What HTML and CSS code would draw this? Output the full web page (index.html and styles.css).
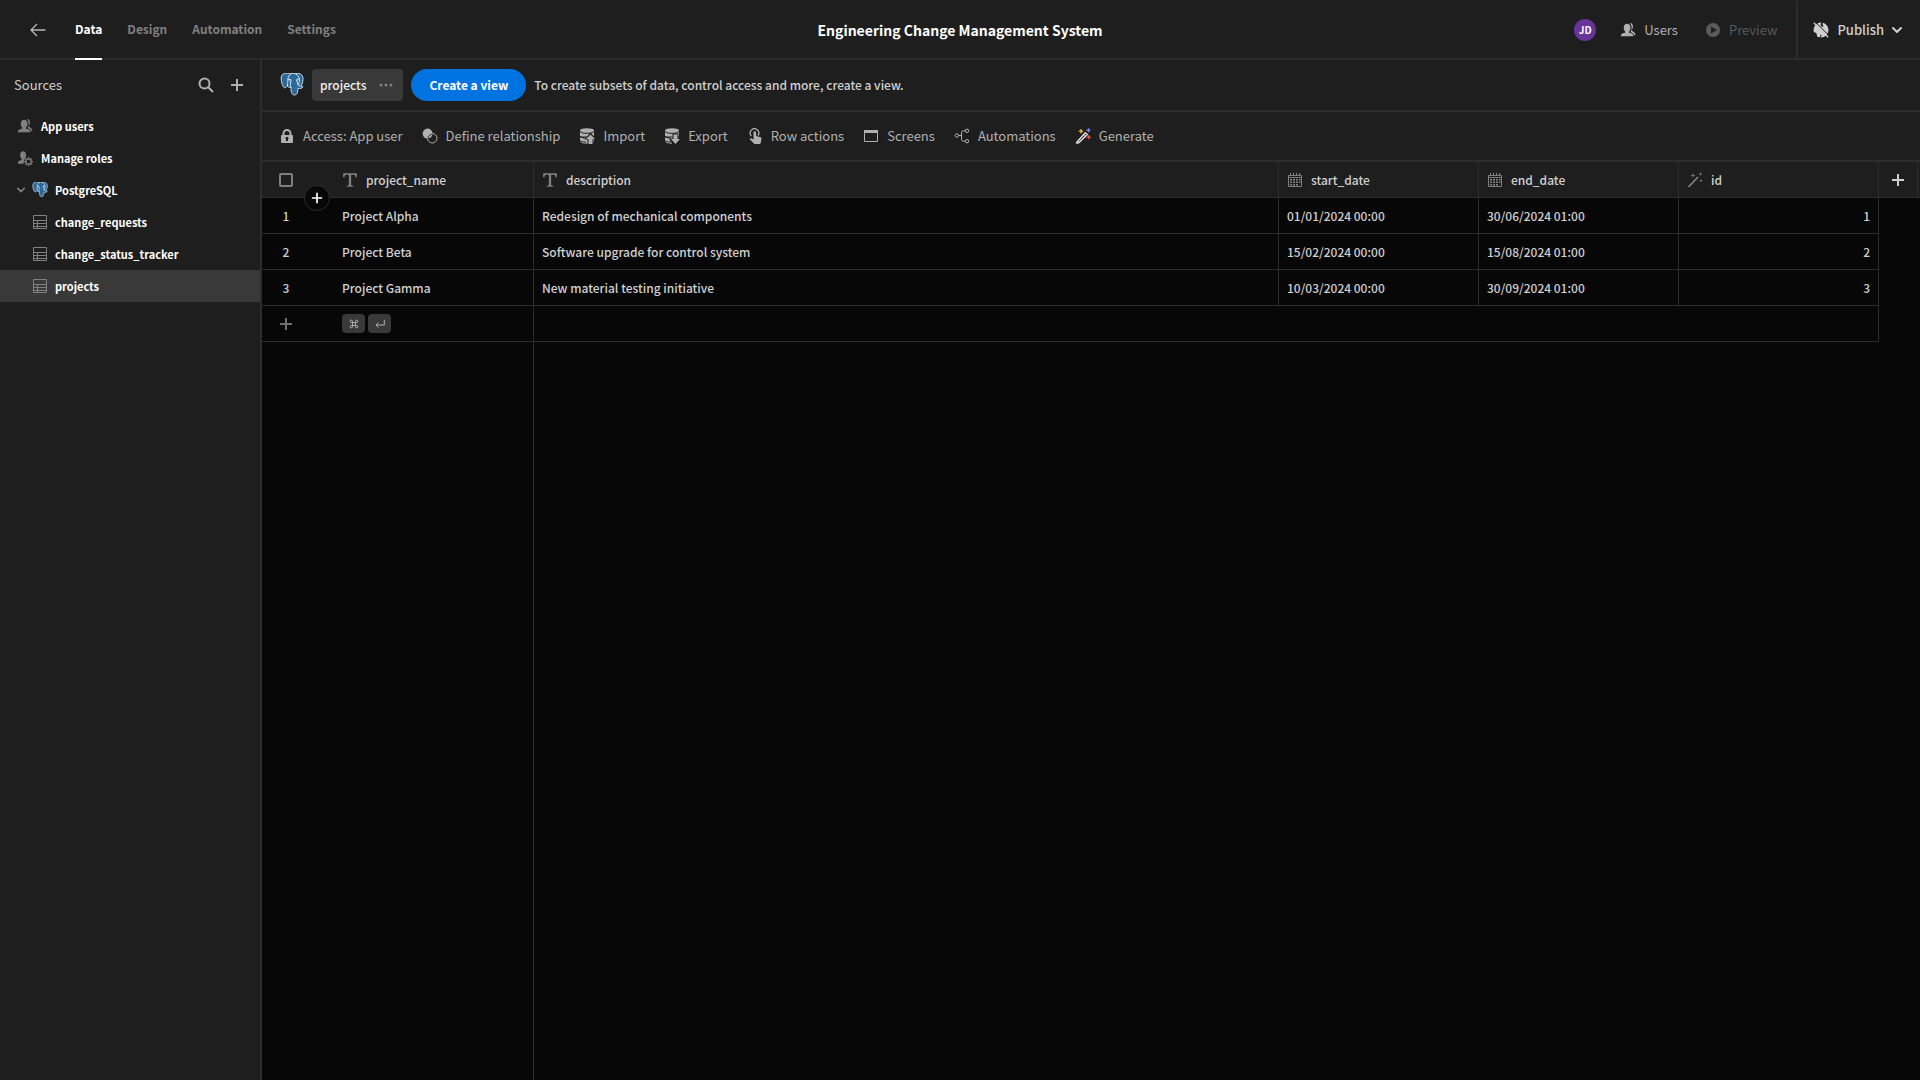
FILE: index.html
```html
<!DOCTYPE html>
<html lang="en">
<head>
    <meta charset="UTF-8">
    <meta name="viewport" content="width=device-width, initial-scale=1.0">
    <title>Engineering Change Management System</title>
    <link rel="stylesheet" href="styles.css">
</head>
<body>
    <!-- shared icons -->
    <svg class="sprite" aria-hidden="true">
        <symbol id="icon-plus" viewBox="0 0 14 14">
            <path d="M7 1v12M1 7h12" fill="none" stroke="currentColor" stroke-width="2"/>
        </symbol>
        <symbol id="icon-chevron" viewBox="0 0 10 10">
            <path d="M1 3l4 4 4-4" fill="none" stroke="currentColor" stroke-width="2" stroke-linecap="round" stroke-linejoin="round"/>
        </symbol>
        <symbol id="icon-users" viewBox="0 0 18 18">
            <path d="M10 11.500c0-.4.2-.7.400-1 .9-1 1.400-2.400 1.400-4C11.800 3.600 10.300 2 8 2S4.200 3.600 4.200 6.500c0 1.600.6 3 1.400 4 .3.300.4.600.4 1 0 .3-.2.600-.6.700C2.500 12.700 1 14 1 15.400V16h14v-.6c0-1.400-1.500-2.700-4.400-3.200-.4-.1-.6-.4-.6-.7z"/>
            <path d="M10.800 1.200c2.300-.2 3.800 1.400 3.800 4 0 1.700-.7 3-1.400 3.900-.3.400-.1.900.3 1.100 2.100.8 3.800 2 3.800 4.600h-1.500c-.5-1.800-2.200-2.900-4.200-3.500 1-1.200 1.500-2.900 1.500-4.800 0-2.300-.9-4.200-2.300-5.300z"/>
        </symbol>
        <symbol id="icon-postgres" viewBox="0 1 24 24">
            <path d="M4.500 1.500C1.500 2 .8 5 1.300 8.500c.5 3.500 1.800 7.300 3.500 7.300 1 0 1.700-1 2.500-1.800l1 .9c.8.500 2 .7 2.700.5 0 3 .2 7.600 3.400 7.600 3 0 3.300-3 3.500-6.500 1.800.2 4.300-.2 5-1.500.3-.8-1-.7-2-.6 1.600-2.800 3-7.600 1.600-10.200C21 1.200 17.400 1 15.200 1.700c-1.300-.4-3-.4-4.300.2C9 1.200 6.500 1 4.500 1.500z" fill="#2b6a98" stroke="#c8d6e0" stroke-width="1" stroke-linejoin="round"/>
            <path d="M10.900 2C8.200 3.400 7.700 6 7.900 9c.1 2-.9 3.600-.5 5M8 7.600c1.400-.8 3-.5 3 .8 0 2-.8 3.500-.8 5 0 1 .4 1.600 1.200 2M15.500 1.800c2.500 1.300 4 3.600 4 5.700 0 2.700-.9 4-.9 5.400 0 1 .8 1.300 1.300 1.300M19.300 7.200c-1.600-.7-2.900-.2-2.700 1.200.1 1.900 1.500 3 1.500 4.600" fill="none" stroke="#d8e3ec" stroke-width="1" stroke-linecap="round"/>
            <circle cx="10" cy="8" r=".6" fill="#fff"/>
            <circle cx="17.500" cy="8" r=".6" fill="#fff"/>
        </symbol>
        <symbol id="icon-table" viewBox="0 0 14 14">
            <path d="M.5.5h13v13H.5zM.5 5.500h13M.5 8.500h13M.5 11.500h13M4.500 5.500v8" fill="none" stroke="currentColor"/>
        </symbol>
        <symbol id="icon-text" viewBox="0 0 14 14">
            <path d="M1 1h12v3.500h-1.200c-.1-1.400-.5-2-1.900-2H8v8.600c0 .7.500.9 1.800.9v1H4.200v-1c1.300 0 1.800-.2 1.800-.9V2.500H4.100c-1.400 0-1.800.6-1.900 2H1z"/>
        </symbol>
        <symbol id="icon-calendar" viewBox="0 0 16 16">
            <path d="M1.500 3.500h13v11h-13zM1.500 5.500h13" fill="none" stroke="currentColor"/>
            <path d="M3 1h1v3H3zM6 1h1v3H6zM9 1h1v3H9zM12 1h1v3h-1zM3 7h2v1.500H3zM6 7h2v1.500H6zM9 7h2v1.500H9zM12 7h1.500v1.500H12zM3 9.500h2V11H3zM6 9.500h2V11H6zM9 9.500h2V11H9zM12 9.500h1.500V11H12zM3 12h2v1.500H3zM6 12h2v1.500H6zM9 12h2v1.500H9z"/>
        </symbol>
        <symbol id="icon-data" viewBox="0 0 16 16">
            <ellipse cx="8" cy="2.500" rx="7" ry="2.300"/>
            <path d="M1 4c1.500 1.300 4 1.800 7 1.800S13.500 5.300 15 4v4.500H1zM1 9.300h14v4.200c-1.500 1.500-4 2.200-7 2.200s-6-.7-7-2.200z"/>
            <path class="cutout" d="M0 7.600c2 1.300 4 1.900 7 2v.9c-3-.1-5-.6-7-1.800zM0 11.700c2 1.300 4 1.800 7 1.900v.9c-3-.1-5-.6-7-1.800z"/>
        </symbol>
    </svg>

    <header class="topbar">
        <nav class="topbar-nav">
            <a href="#" class="back" aria-label="Back">
                <svg class="icon" viewBox="0 0 16 16"><path d="M15.500 8H1M7 2L1 8l6 6" fill="none" stroke="currentColor" stroke-width="1.300"/></svg>
            </a>
            <a href="#" class="tab active">Data</a>
            <a href="#" class="tab">Design</a>
            <a href="#" class="tab">Automation</a>
            <a href="#" class="tab">Settings</a>
        </nav>
        <h1 class="app-title">Engineering Change Management System</h1>
        <div class="topbar-actions">
            <span class="avatar">JD</span>
            <button type="button" class="action users">
                <svg class="icon"><use href="#icon-users"/></svg>
                Users
            </button>
            <button type="button" class="action preview" disabled>
                <svg class="icon" viewBox="0 0 16 16"><path fill-rule="evenodd" d="M8 1a7 7 0 1 0 0 14A7 7 0 0 0 8 1zM6 4.500L12 8l-6 3.500z"/></svg>
                Preview
            </button>
            <button type="button" class="action publish">
                <svg class="icon" viewBox="0 0 16 16">
                    <circle cx="8" cy="8" r="7.500"/>
                    <path class="cutout" d="M8.500 0h1.700l-.7 2.500 1 1.500-1 1L7.500 3.500zM0 10l3 .8 1 2-.5 2.200L0 13zM7.500 12.500l1 .5-.5 3H7z"/>
                    <path class="cutout-line" d="M2.200-.2L16.200 13.800"/>
                    <path d="M.8.800l14.400 14.400" stroke="currentColor" stroke-width="1.300"/>
                </svg>
                Publish
                <svg class="chevron"><use href="#icon-chevron"/></svg>
            </button>
        </div>
    </header>

    <div class="workspace">
        <aside class="sidebar">
            <div class="sidebar-header">
                <h2>Sources</h2>
                <button type="button" class="icon-btn" aria-label="Search">
                    <svg class="icon" viewBox="0 0 16 16"><path d="M10.500 10.500L15 15M11.500 6.500a5 5 0 1 1-10 0 5 5 0 0 1 10 0z" fill="none" stroke="currentColor" stroke-width="2"/></svg>
                </button>
                <button type="button" class="icon-btn" aria-label="Add source">
                    <svg class="icon plus"><use href="#icon-plus"/></svg>
                </button>
            </div>
            <nav class="source-list">
                <a href="#" class="source">
                    <svg class="icon"><use href="#icon-users"/></svg>
                    App users
                </a>
                <a href="#" class="source">
                    <svg class="icon" viewBox="0 0 18 18">
                        <path d="M8.500 10.800c0-.5.100-.8.400-1.100.8-1 1.300-2.300 1.300-3.900 0-2.700-1.300-4.300-3.400-4.300S3.500 3.100 3.500 5.800c0 1.600.5 2.900 1.300 3.900.5.700.4 1.700-.4 1.900C2 12.100 1 13.300 1 15v.500h6.600c-.3-1.700.1-3.300.9-4.700z"/>
                        <circle cx="13" cy="13" r="3" fill="none" stroke="currentColor" stroke-width="1.400"/>
                        <path d="M13 8v2M13 16v2M8 13h2M16 13h2M9.500 9.500l1.400 1.400M15.100 15.100l1.400 1.400M9.500 16.500l1.400-1.400M15.100 10.900l1.400-1.400" stroke="currentColor" stroke-width="1.500"/>
                    </svg>
                    Manage roles
                </a>
                <a href="#" class="source datasource">
                    <svg class="chevron"><use href="#icon-chevron"/></svg>
                    <svg class="icon"><use href="#icon-postgres"/></svg>
                    PostgreSQL
                </a>
                <a href="#" class="source table-link">
                    <svg class="icon table-icon"><use href="#icon-table"/></svg>
                    change_requests
                </a>
                <a href="#" class="source table-link">
                    <svg class="icon table-icon"><use href="#icon-table"/></svg>
                    change_status_tracker
                </a>
                <a href="#" class="source table-link selected">
                    <svg class="icon table-icon"><use href="#icon-table"/></svg>
                    projects
                </a>
            </nav>
        </aside>

        <main class="content">
            <div class="view-bar">
                <svg class="view-logo"><use href="#icon-postgres"/></svg>
                <button type="button" class="view-tab">
                    projects
                    <svg class="more" viewBox="0 0 14 4"><circle cx="2" cy="2" r="1.500"/><circle cx="7" cy="2" r="1.500"/><circle cx="12" cy="2" r="1.500"/></svg>
                </button>
                <button type="button" class="create-view">Create a view</button>
                <p class="view-hint">To create subsets of data, control access and more, create a view.</p>
            </div>

            <div class="toolbar">
                <button type="button" class="tool">
                    <svg class="icon" viewBox="0 0 16 16"><path fill-rule="evenodd" d="M13 7h-.5V5.500a4.500 4.500 0 0 0-9 0V7H3a1 1 0 0 0-1 1v6a1 1 0 0 0 1 1h10a1 1 0 0 0 1-1V8a1 1 0 0 0-1-1zM5.500 5.500a2.500 2.500 0 0 1 5 0V7h-5zM9 11.500V13H7v-1.500a1.500 1.500 0 1 1 2 0z"/></svg>
                    Access: App user
                </button>
                <button type="button" class="tool">
                    <svg class="icon" viewBox="0 0 16 16">
                        <path d="M10.600 5.200A5 5 0 1 0 5.200 10.600a5.500 5.500 0 0 1 5.400-5.400z"/>
                        <path d="M6.600 10.300a5 5 0 0 0 3.900-3.900 4.500 4.500 0 0 0-3.900 3.900z"/>
                        <circle cx="10.300" cy="10.300" r="4.700" fill="none" stroke="currentColor"/>
                    </svg>
                    Define relationship
                </button>
                <button type="button" class="tool">
                    <svg class="icon" viewBox="0 0 16 16">
                        <use href="#icon-data" width="16" height="16"/>
                        <path class="cutout" d="M11.500 4.500l6 6.500h-3v6H8.500v-5.500H5.500z"/>
                        <path d="M11.500 6.500L16 11h-2.500v5h-4v-5H7z"/>
                    </svg>
                    Import
                </button>
                <button type="button" class="tool">
                    <svg class="icon" viewBox="0 0 16 16">
                        <use href="#icon-data" width="16" height="16"/>
                        <path class="cutout" d="M8.500 5.500h6v4h3v2L12 17H9l-3.500-5.500v-1h3z"/>
                        <path d="M9.500 6.500h4V11H16l-4.500 5L7 11h2.500z"/>
                    </svg>
                    Export
                </button>
                <button type="button" class="tool">
                    <svg class="icon" viewBox="0 0 16 16">
                        <path d="M4.300 8A4.300 4.300 0 1 1 11 7.600" fill="none" stroke="currentColor" stroke-width="1.300"/>
                        <path d="M6.500 4.500a1.300 1.300 0 0 1 2.600 0V8l4 .9c.9.200 1.400.8 1.400 1.700l-.7 4-.6 1.400H7.500L3 11.500c-.5-.7.2-1.500 1-1.200l2.500 1.200z"/>
                    </svg>
                    Row actions
                </button>
                <button type="button" class="tool">
                    <svg class="icon" viewBox="0 0 16 16"><path d="M1 2h14v3H1z"/><path d="M1.500 2.500h13v11h-13z" fill="none" stroke="currentColor"/></svg>
                    Screens
                </button>
                <button type="button" class="tool">
                    <svg class="icon" viewBox="0 0 16 16">
                        <g fill="none" stroke="currentColor">
                            <circle cx="2.800" cy="7.500" r="1.700"/>
                            <circle cx="13" cy="2.800" r="1.700"/>
                            <circle cx="13" cy="13.200" r="1.700"/>
                            <path d="M4.500 7.500h3M11.300 2.800H9.500a2 2 0 0 0-2 2v6.400a2 2 0 0 0 2 2h1.800"/>
                        </g>
                    </svg>
                    Automations
                </button>
                <button type="button" class="tool">
                    <svg class="icon" viewBox="0 0 16 16">
                        <path d="M1.800 14.300l8.500-9.600 2 1.800-8.500 8.300-2.300.2z" fill="none" stroke="#e0e0e0" stroke-width="1.400" stroke-linejoin="round"/>
                        <path d="M8.500 7l2 1.800" stroke="#e0e0e0"/>
                        <path d="M6 1l.6 1.600 1.600.6-1.600.6L6 5.400l-.6-1.600-1.600-.6 1.600-.6z" fill="#f2c83e" stroke="#f2c83e" stroke-width=".5"/>
                        <path d="M13.500 0l.6 1.600 1.600.6-1.600.6-.6 1.600-.6-1.600-1.600-.6 1.600-.6z" fill="#8488ee" stroke="#8488ee" stroke-width=".5"/>
                        <path d="M13.800 7l.6 1.600 1.600.6-1.600.6-.6 1.600-.6-1.600-1.600-.6 1.600-.6z" fill="#ef5b4c" stroke="#ef5b4c" stroke-width=".5"/>
                    </svg>
                    Generate
                </button>
            </div>

            <div class="grid">
                <button type="button" class="insert-row" aria-label="Insert row">
                    <svg class="icon"><use href="#icon-plus"/></svg>
                </button>
                <table class="data-table">
                    <colgroup>
                        <col class="col-gutter">
                        <col class="col-field">
                        <col>
                        <col class="col-field">
                        <col class="col-field">
                        <col class="col-field">
                        <col class="col-add">
                    </colgroup>
                    <thead>
                        <tr>
                            <th class="gutter"><input type="checkbox" class="select-all" aria-label="Select all rows"></th>
                            <th><span class="field"><svg class="icon"><use href="#icon-text"/></svg>project_name</span></th>
                            <th><span class="field"><svg class="icon"><use href="#icon-text"/></svg>description</span></th>
                            <th><span class="field"><svg class="icon"><use href="#icon-calendar"/></svg>start_date</span></th>
                            <th><span class="field"><svg class="icon"><use href="#icon-calendar"/></svg>end_date</span></th>
                            <th>
                                <span class="field">
                                    <svg class="icon" viewBox="0 0 16 16">
                                        <path d="M1.500 15L11 5" stroke="currentColor" stroke-width="1.800"/>
                                        <path d="M6 1l.6 1.900 1.900.6-1.900.6L6 6l-.6-1.900-1.900-.6 1.900-.6zM13.500 0l.5 1.500 1.500.5-1.500.5-.5 1.500-.5-1.500-1.500-.5 1.500-.5zM14 7l.5 1.300 1.300.5-1.300.5-.5 1.300-.5-1.300-1.300-.5 1.300-.5z"/>
                                    </svg>
                                    id
                                </span>
                            </th>
                            <th class="add-column">
                                <button type="button" aria-label="Add column"><svg class="icon plus"><use href="#icon-plus"/></svg></button>
                            </th>
                        </tr>
                    </thead>
                    <tbody>
                        <tr>
                            <td class="gutter">1</td>
                            <td>Project Alpha</td>
                            <td>Redesign of mechanical components</td>
                            <td>01/01/2024 00:00</td>
                            <td>30/06/2024 01:00</td>
                            <td class="number">1</td>
                        </tr>
                        <tr>
                            <td class="gutter">2</td>
                            <td>Project Beta</td>
                            <td>Software upgrade for control system</td>
                            <td>15/02/2024 00:00</td>
                            <td>15/08/2024 01:00</td>
                            <td class="number">2</td>
                        </tr>
                        <tr>
                            <td class="gutter">3</td>
                            <td>Project Gamma</td>
                            <td>New material testing initiative</td>
                            <td>10/03/2024 00:00</td>
                            <td>30/09/2024 01:00</td>
                            <td class="number">3</td>
                        </tr>
                        <tr class="new-row">
                            <td class="gutter">
                                <button type="button" aria-label="Add row"><svg class="icon plus"><use href="#icon-plus"/></svg></button>
                            </td>
                            <td>
                                <span class="keys">
                                    <kbd><svg viewBox="0 0 10 10"><path d="M3.500 3.500h3v3h-3zM3.500 3.500H2.300a1.200 1.200 0 1 1 1.200-1.200zM6.500 3.500V2.300a1.200 1.200 0 1 1 1.200 1.200zM6.500 6.500h1.200a1.200 1.200 0 1 1-1.200 1.200zM3.500 6.500v1.200a1.200 1.200 0 1 1-1.200-1.200z"/></svg></kbd>
                                    <kbd><svg viewBox="0 0 10 10"><path d="M9.300 1v5H1M3.500 3.500L1 6l2.500 2.500"/></svg></kbd>
                                </span>
                            </td>
                            <td colspan="4"></td>
                        </tr>
                    </tbody>
                </table>
                <div class="pinned-rest"></div>
            </div>
        </main>
    </div>
</body>
</html>
```

FILE: styles.css
```css
* {
    box-sizing: border-box;
}

body {
    display: flex;
    flex-direction: column;
    min-height: 100vh;
    margin: 0;
    background-color: #1e1e1e;
    color: #d0d0d0;
    font-family: "Noto Sans CJK SC", "Noto Sans", sans-serif;
    font-size: 12px;
    line-height: 20px;
}

a {
    color: inherit;
    text-decoration: none;
}

button {
    padding: 0;
    border: none;
    background: none;
    color: inherit;
    font: inherit;
    cursor: pointer;
}

h1,
h2,
p {
    margin: 0;
}

svg {
    flex: none;
    fill: currentColor;
}

.sprite {
    position: absolute;
    width: 0;
    height: 0;
}

.icon {
    display: block;
    width: 16px;
    height: 16px;
}

.plus {
    width: 14px;
    height: 14px;
}

.chevron {
    width: 10px;
    height: 10px;
}

.cutout {
    fill: #1e1e1e;
}

.cutout-line {
    stroke: #1e1e1e;
    stroke-width: 1;
}

/* Top bar */
.topbar {
    display: grid;
    grid-template-columns: 1fr auto 1fr;
    height: 60px;
    border-bottom: 2px solid #2c2c2c;
}

.topbar-nav {
    display: flex;
    gap: 25px;
    padding-left: 30px;
}

.back {
    display: flex;
    align-items: center;
    margin-right: 4px;
    color: #b8b8b8;
}

.tab {
    display: flex;
    align-items: center;
    height: 60px;
    border-bottom: 2px solid transparent;
    color: #808080;
    font-weight: 600;
}

.tab.active {
    border-color: #fff;
    color: #fff;
}

.app-title {
    align-self: center;
    color: #fff;
    font-size: 14px;
    font-weight: 600;
}

.topbar-actions {
    display: flex;
    align-items: center;
    justify-content: flex-end;
}

.avatar {
    width: 22px;
    height: 22px;
    margin-right: 24px;
    border-radius: 50%;
    background-color: #6a3399;
    color: #fff;
    font-size: 10px;
    font-weight: 600;
    line-height: 22px;
    text-align: center;
}

.action {
    display: flex;
    align-items: center;
    gap: 8px;
    color: #b0b0b0;
    font-size: 13px;
}

.preview {
    margin: 0 19px 0 27px;
    color: #5a5a5a;
    cursor: default;
}

.publish {
    height: 58px;
    padding: 0 18px 0 15px;
    border-left: 2px solid #2c2c2c;
    color: #d0d0d0;
    font-weight: 500;
}

/* Sidebar */
.workspace {
    display: flex;
    flex: 1;
}

.sidebar {
    flex: none;
    width: 262px;
    border-right: 2px solid #2c2c2c;
}

.sidebar-header {
    display: flex;
    align-items: center;
    gap: 16px;
    height: 50px;
    padding: 0 16px 0 14px;
}

.sidebar-header h2 {
    flex: 1;
    font-size: 13px;
    font-weight: 400;
}

.icon-btn {
    color: #b0b0b0;
}

.source {
    display: flex;
    align-items: center;
    gap: 8px;
    height: 32px;
    padding-left: 17px;
    color: #fff;
    font-size: 11px;
    font-weight: 600;
}

.source .icon,
.source .chevron {
    color: #808080;
}

.source .chevron {
    width: 8px;
    height: 8px;
}

.table-icon {
    width: 14px;
    height: 14px;
}

.datasource {
    gap: 7px;
}

.table-link {
    padding-left: 33px;
}

.selected {
    background-color: #393939;
}

/* View bar */
.content {
    display: flex;
    flex: 1;
    flex-direction: column;
    min-width: 0;
}

.view-bar {
    display: flex;
    align-items: center;
    gap: 8px;
    height: 52px;
    padding-left: 18px;
    border-bottom: 2px solid #2c2c2c;
    font-weight: 500;
}

.view-logo {
    width: 24px;
    height: 24px;
}

.view-tab {
    display: flex;
    align-items: center;
    gap: 13px;
    height: 32px;
    padding: 0 10px 0 8px;
    border-radius: 4px;
    background-color: #393939;
    color: #f0f0f0;
}

.more {
    width: 14px;
    height: 4px;
    color: #808080;
}

.create-view {
    height: 32px;
    padding: 0 18px;
    border-radius: 16px;
    background-color: #0073e0;
    color: #fff;
    font-weight: 600;
}

/* Toolbar */
.toolbar {
    display: flex;
    align-items: center;
    gap: 19px;
    height: 50px;
    padding-left: 17px;
    border-bottom: 2px solid #2c2c2c;
}

.tool {
    display: flex;
    align-items: center;
    gap: 8px;
    color: #b0b0b0;
    font-size: 13px;
}

/* Grid */
.grid {
    display: flex;
    position: relative;
    flex: 1;
    flex-direction: column;
    background-color: #070707;
}

.data-table {
    width: 100%;
    border-spacing: 0;
    table-layout: fixed;
}

.col-gutter {
    width: 72px;
}

.col-field {
    width: 200px;
}

.col-add {
    width: 41px;
}

.data-table th,
.data-table td {
    height: 36px;
    padding: 0 8px;
    border-right: 1px solid #2c2c2c;
    border-bottom: 1px solid #2c2c2c;
    font-weight: 500;
    text-align: left;
}

.data-table th {
    background-color: #1e1e1e;
}

.data-table .gutter {
    padding: 0 24px 0 0;
    border-right: none;
    text-align: center;
}

.data-table .number {
    text-align: right;
}

.data-table .add-column {
    padding: 0 2px 0 0;
    border-right: none;
}

.field {
    display: flex;
    align-items: center;
    gap: 8px;
}

.field .icon {
    color: #808080;
}

.add-column button {
    display: flex;
    align-items: center;
    justify-content: center;
    width: 100%;
    height: 35px;
    border-right: 1px solid #2c2c2c;
}

.select-all {
    display: block;
    width: 14px;
    height: 14px;
    margin: 0 auto;
    border: 2px solid #808080;
    border-radius: 2px;
    appearance: none;
}

.new-row button {
    display: block;
    margin: 0 auto;
    color: #707070;
}

.keys {
    display: flex;
    gap: 3px;
}

kbd {
    display: flex;
    align-items: center;
    justify-content: center;
    width: 23px;
    height: 19px;
    border-radius: 4px;
    background-color: #393939;
}

kbd svg {
    width: 10px;
    height: 10px;
    fill: none;
    stroke: #b0b0b0;
}

.insert-row {
    display: flex;
    position: absolute;
    top: 23px;
    left: 42px;
    align-items: center;
    justify-content: center;
    width: 26px;
    height: 26px;
    border: 1px solid #2c2c2c;
    border-radius: 50%;
    background-color: #070707;
    color: #fff;
}

.insert-row .icon {
    width: 12px;
    height: 12px;
}

/* keeps the edge of the pinned column running below the last row */
.pinned-rest {
    flex: 1;
    width: 272px;
    border-right: 1px solid #2c2c2c;
}
```
